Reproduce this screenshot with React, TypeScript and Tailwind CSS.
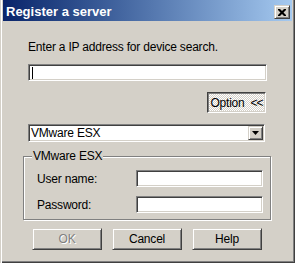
const font = { fontFamily: '"Liberation Sans", Arial, sans-serif' };

const raised =
  "border border-t-[#d4d0c8] border-l-[#d4d0c8] border-r-[#404040] border-b-[#404040] shadow-[inset_1px_1px_#fff,inset_-1px_-1px_#808080]";
const sunken =
  "border border-t-[#808080] border-l-[#808080] border-r-white border-b-white shadow-[inset_1px_1px_#404040,inset_-1px_-1px_#d4d0c8]";

const PushButton = ({ label, disabled }: { label: string; disabled?: boolean }) => (
  <div
    className={`${raised} w-[70px] h-[22px] bg-[#d4d0c8] flex items-center justify-center text-[12px] tracking-[-0.2px] ${
      disabled ? "text-[#808080] [text-shadow:1px_1px_#fff]" : "text-black"
    }`}
  >
    {label}
  </div>
);

const Field = ({ label }: { label: string }) => (
  <div className="flex items-center">
    <span className="w-[99px] text-[12px] tracking-[-0.2px] leading-[14px]">{label}</span>
    <div className={`${sunken} w-[127px] h-[17px] bg-white`} />
  </div>
);

export default function App() {
  return (
    <div
      className="w-[295px] h-[263px] bg-[#d4d0c8] flex flex-col px-[3px] text-black shadow-[inset_1px_0_#d4d0c8,inset_2px_0_#fff,inset_-1px_-1px_#404040,inset_-2px_-2px_#808080]"
      style={font}
    >
      {/* title bar */}
      <div className="h-[21px] flex items-end justify-between pl-[3px] pr-[2px] pb-[2px] bg-gradient-to-r from-[#0a246a] to-[#a6caf0]">
        <span className="text-white font-bold text-[13px] leading-[14px]">Register a server</span>
        <div className={`${raised} w-[16px] h-[14px] bg-[#d4d0c8] flex items-center justify-center`}>
          <svg width="8" height="7" viewBox="0 0 8 7">
            <path d="M0 0h2l2 2 2-2h2v1l-2.5 2.5 2.5 2.5v1h-2l-2-2-2 2h-2v-1l2.5-2.5-2.5-2.5z" fill="#000" />
          </svg>
        </div>
      </div>

      {/* body */}
      <div className="flex flex-col items-start pl-[25px] text-[12px] tracking-[-0.2px]">
        <p className="mt-[19px] h-[14px] leading-[14px]">Enter a IP address for device search.</p>

        <div className={`${sunken} mt-[10px] w-[239px] h-[17px] bg-white flex items-center pl-[3px]`}>
          <span className="w-px h-[12px] bg-black" />
        </div>

        <div
          className={`ml-[179px] mt-[11px] w-[59px] h-[21px] flex items-center justify-center gap-[6px] border border-t-[#404040] border-l-[#404040] border-r-white border-b-white shadow-[inset_1px_1px_#808080,inset_-1px_-1px_#d4d0c8] bg-[repeating-conic-gradient(#fff_0%_25%,#d4d0c8_0%_50%)] bg-[length:2px_2px]`}
        >
          <span>Option</span>
          <span className="tracking-[-1px]">&lt;&lt;</span>
        </div>

        <div className={`${sunken} mt-[11px] w-[237px] h-[18px] bg-white flex items-center justify-between pl-[2px] pr-px`}>
          <span className="leading-[14px]">VMware ESX</span>
          <div className={`${raised} w-[15px] h-[14px] bg-[#d4d0c8] flex items-center justify-center`}>
            <svg width="7" height="4" viewBox="0 0 7 4">
              <path d="M0 0h7l-3.5 4z" fill="#000" />
            </svg>
          </div>
        </div>

        {/* group box */}
        <div className="relative -ml-[5px] mt-[14px] w-[248px] h-[64px] border border-[#808080] shadow-[inset_1px_1px_#fff,1px_1px_#fff] flex flex-col gap-[9px] pt-[13px] pl-[13px]">
          <span className="absolute -top-[8px] left-[8px] px-[1px] bg-[#d4d0c8] leading-[14px]">VMware ESX</span>
          <Field label="User name:" />
          <Field label="Password:" />
        </div>

        <div className="flex gap-[10px] ml-[4px] mt-[8px]">
          <PushButton label="OK" disabled />
          <PushButton label="Cancel" />
          <PushButton label="Help" />
        </div>
      </div>
    </div>
  );
}
